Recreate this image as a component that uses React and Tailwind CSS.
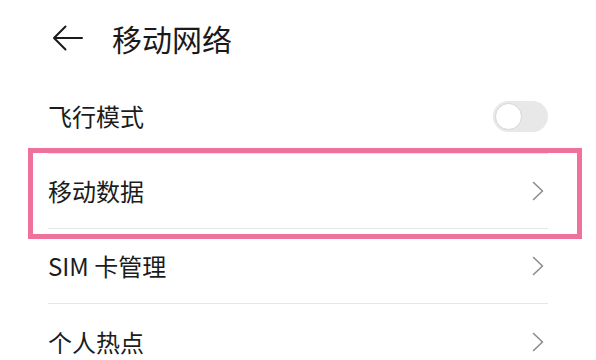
import React from 'react';

const font = { fontFamily: '"Noto Sans CJK SC", "Noto Sans", sans-serif' };

const Chevron = () => (
  <svg width="12" height="20" viewBox="0 0 12 20" fill="none" className="mr-[4px]">
    <polyline points="1.5,1.5 10.5,10 1.5,18.5" stroke="#8c8c8c" strokeWidth="1.6" strokeLinecap="round" strokeLinejoin="round" />
  </svg>
);

const Toggle = () => (
  <div className="w-[55px] h-[31px] rounded-full bg-[#e8e8e8] flex items-center pl-[2px]">
    <div className="w-[27px] h-[27px] rounded-full bg-white border border-[#d6d6d6]" />
  </div>
);

const Row = ({ label, children, last }) => (
  <div className={`h-[75px] flex items-center justify-between ${last ? '' : 'border-b border-[#e6e6e6]'}`}>
    <span className="text-[24px] text-[#1c1c1c] leading-none">{label}</span>
    {children}
  </div>
);

const App = () => {
  return (
    <div className="w-[596px] h-[360px] overflow-hidden bg-white" style={font}>
      {/* Header */}
      <div className="h-[75px] flex items-center pl-[52px]">
        <svg width="31" height="26" viewBox="0 0 31 26" fill="none">
          <path d="M30 13H2M13.5 1.5L2 13l11.5 11.5" stroke="#1a1a1a" strokeWidth="2" strokeLinecap="round" strokeLinejoin="round" />
        </svg>
        <h1 className="ml-[29px] text-[30px] text-[#1a1a1a] leading-none">移动网络</h1>
      </div>

      {/* Settings list */}
      <div className="pt-[4px] px-[48px]">
        <Row label="飞行模式">
          <Toggle />
        </Row>
        <div className="relative">
          <Row label="移动数据">
            <Chevron />
          </Row>
          {/* highlight frame */}
          <div className="absolute top-[-6px] bottom-[-10px] left-[-20px] right-[-34px] border-[5px] border-[#ee7299] pointer-events-none" />
        </div>
        <Row label="SIM 卡管理">
          <Chevron />
        </Row>
        <Row label="个人热点" last>
          <Chevron />
        </Row>
      </div>
    </div>
  );
};

export default App;
